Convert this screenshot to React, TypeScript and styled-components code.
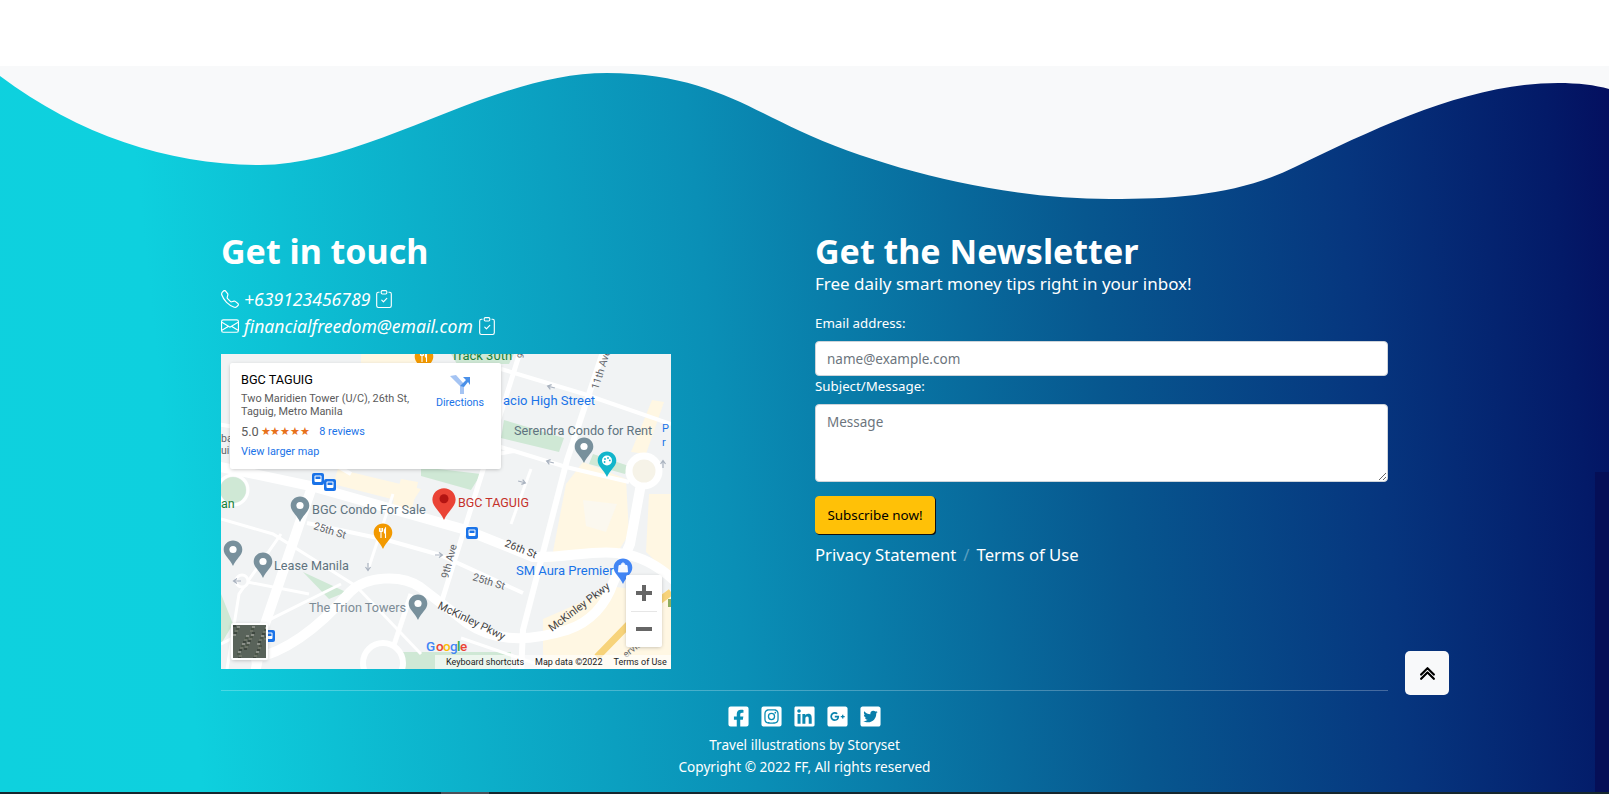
import React from 'react';
import styled, { createGlobalStyle } from 'styled-components';
import { BsTelephone, BsEnvelope, BsClipboardCheck, BsChevronDoubleUp } from 'react-icons/bs';
import { FaFacebookSquare, FaInstagramSquare, FaLinkedin, FaGooglePlusSquare, FaTwitterSquare } from 'react-icons/fa';

const GlobalStyle = createGlobalStyle`
  html, body {
    margin: 0;
    padding: 0;
    height: 794px;
    overflow: hidden;
    background: #fff;
  }
  * { box-sizing: border-box; }
`;

const Page = styled.div`
  width: 1609px;
  height: 794px;
  display: flex;
  flex-direction: column;
  font-family: "Noto Sans", "Open Sans", sans-serif;
  color: #fff;
`;

const TopGap = styled.div`
  height: 66px;
  background: #fff;
  flex: none;
`;

const Footer = styled.footer`
  position: relative;
  height: 728px;
  flex: none;
  display: flex;
  flex-direction: column;
  background: linear-gradient(84deg, #0ed1de 0%, #0ed0de 12%, #0a8fb6 45%, #07578f 68%, #06357e 84%, #031a68 96%, #040f5f 100%);
`;

const Wave = styled.svg`
  display: block;
  flex: none;
  width: 1609px;
  height: 140px;
`;

const Content = styled.div`
  flex: 1;
  width: 1167px;
  margin-left: 221px;
`;

const Columns = styled.div`
  display: grid;
  grid-template-columns: 594px 573px;
  height: 465px;
  padding-top: 19px;
  margin-bottom: 19px;
`;

const Column = styled.div`
  display: flex;
  flex-direction: column;
`;

const Heading = styled.h2`
  margin: 0;
  font-size: 34px;
  line-height: 52px;
  font-weight: 700;
`;

const ContactRow = styled.div`
  display: flex;
  align-items: center;
  gap: 5px;
  height: 27px;
  font-size: 17.6px;
  font-style: italic;
  font-weight: 400;
  svg { flex: none; font-size: 18px; }
`;

const ContactList = styled.div`
  margin-top: 8px;
  margin-bottom: 15px;
`;

const MapFrame = styled.div`
  position: relative;
  width: 450px;
  height: 315px;
  overflow: hidden;
  background: #f1f3f4;
  font-family: Roboto, sans-serif;
`;

const MapSvg = styled.svg`
  display: block;
  width: 450px;
  height: 315px;
`;

const InfoCard = styled.div`
  position: absolute;
  left: 9px;
  top: 9px;
  width: 271px;
  height: 106px;
  background: #fff;
  border-radius: 2px;
  box-shadow: 0 1px 4px -1px rgba(0, 0, 0, 0.3);
  padding: 9px 11px;
  color: #5b5b5b;
`;

const CardTitle = styled.div`
  font-size: 12.7px;
  line-height: 15px;
  font-weight: 400;
  color: #000;
`;

const CardAddress = styled.div`
  font-size: 10.9px;
  line-height: 13px;
  margin-top: 5px;
  width: 185px;
`;

const CardRating = styled.div`
  display: flex;
  align-items: center;
  margin-top: 5px;
  height: 16px;
  font-size: 12.8px;
`;

const CardStars = styled.span`
  color: #e7711b;
  font-size: 11.4px;
  letter-spacing: -0.3px;
  margin: 0 10px 0 2px;
`;

const MapLink = styled.span`
  color: #1a73e8;
  font-size: 10.9px;
`;

const LargerMap = styled(MapLink)`
  display: block;
  margin-top: 6px;
`;

const Directions = styled.div`
  position: absolute;
  top: 11px;
  left: 195px;
  width: 70px;
  display: flex;
  flex-direction: column;
  align-items: center;
  gap: 2px;
  font-size: 10.7px;
  color: #1a73e8;
`;

const ZoomBox = styled.div`
  position: absolute;
  left: 405px;
  top: 221px;
  width: 36px;
  height: 72px;
  background: #fff;
  border-radius: 2px;
  box-shadow: 0 1px 4px -1px rgba(0, 0, 0, 0.3);
  display: flex;
  flex-direction: column;
`;

const ZoomButton = styled.div<{ $divided?: boolean }>`
  flex: 1;
  display: flex;
  align-items: center;
  justify-content: center;
  ${(p) => (p.$divided ? 'border-top: 1px solid #e6e6e6; margin: 0 5px;' : '')}
`;

const SatelliteThumb = styled.div`
  position: absolute;
  left: 10px;
  top: 269px;
  width: 37px;
  height: 37px;
  border: 2px solid #fff;
  border-radius: 2px;
  box-shadow: 0 1px 4px -1px rgba(0, 0, 0, 0.3);
  overflow: hidden;
  background: #5b655a;
  svg { display: block; }
`;

const Attribution = styled.div`
  position: absolute;
  left: 214px;
  right: 0;
  bottom: 0;
  height: 14px;
  display: flex;
  align-items: center;
  gap: 11px;
  padding-left: 11px;
  font-size: 9px;
  color: #222;
  background: rgba(255, 255, 255, 0.6);
  white-space: nowrap;
`;

const Lead = styled.p`
  margin: -4px 0 0;
  font-size: 17px;
  line-height: 22px;
`;

const Form = styled.form`
  display: flex;
  flex-direction: column;
  margin-top: 16px;
`;

const Label = styled.label`
  font-size: 13.3px;
  line-height: 20px;
  height: 30px;
  padding-top: 2px;
`;

const SubjectLabel = styled(Label)`
  height: 28px;
  padding-top: 0;
`;

const Input = styled.input`
  width: 573px;
  height: 35px;
  border: 1px solid #ced4da;
  border-radius: 4px;
  padding: 0 11px;
  font: 13.5px "Noto Sans", sans-serif;
  color: #212529;
  background: #fff;
  &::placeholder { color: #6c757d; }
`;

const TextArea = styled.textarea`
  display: block;
  width: 573px;
  height: 78px;
  border: 1px solid #ced4da;
  border-radius: 4px;
  padding: 7px 11px;
  font: 13.5px/20px "Noto Sans", sans-serif;
  background: #fff;
  resize: vertical;
  &::placeholder { color: #6c757d; }
`;

const Subscribe = styled.button`
  align-self: flex-start;
  width: 120px;
  height: 38px;
  margin-top: 14px;
  border: 1px solid #ffc107;
  border-radius: 4px;
  background: #ffc107;
  box-shadow: 1px 1px 0 #111;
  font: 13.4px "Noto Sans", sans-serif;
  color: #000;
  padding: 0;
`;

const Legal = styled.div`
  display: flex;
  align-items: center;
  gap: 7px;
  height: 24px;
  margin-top: 8px;
  font-size: 16.7px;
`;

const Slash = styled.span`
  color: rgba(255, 255, 255, 0.35);
`;

const Divider = styled.hr`
  margin: 0;
  border: 0;
  border-top: 1px solid rgba(255, 255, 255, 0.25);
`;

const Socials = styled.div`
  display: flex;
  justify-content: center;
  gap: 10px;
  margin-top: 14px;
  font-size: 23px;
  line-height: 0;
`;

const Credits = styled.div`
  margin-top: 6px;
`;

const Credit = styled.div`
  text-align: center;
  font-size: 13.6px;
  line-height: 22px;
`;

const BackToTop = styled.button`
  position: absolute;
  left: 1405px;
  top: 585px;
  width: 44px;
  height: 44px;
  border: 0;
  border-radius: 5px;
  background: #f8f9fa;
  color: #000;
  display: flex;
  align-items: center;
  justify-content: center;
  font-size: 17px;
  padding: 0;
`;

const EdgeShade = styled.div`
  position: absolute;
  left: 1595px;
  right: 0;
  top: 406px;
  bottom: 2px;
  background: #050f57;
`;

const BottomBar = styled.div`
  flex: none;
  height: 2px;
  background: #16272e;
`;

const BarThumb = styled.div`
  width: 48px;
  height: 2px;
  margin-left: 441px;
  background: #4b5058;
`;

type PinProps = { x: number; y: number; color?: string; scale?: number; children?: React.ReactNode };

// map pin, x/y is the centre of the head
const Pin = ({ x, y, color = '#78909c', scale = 1, children }: PinProps) => (
  <g transform={`translate(${x} ${y}) scale(${scale})`}>
    <path d="M0 -9.5C5.2 -9.5 9.3 -5.4 9.3 -0.3C9.3 5.2 3 9 0 16C-3 9 -9.3 5.2 -9.3 -0.3C-9.3 -5.4 -5.2 -9.5 0 -9.5Z" fill={color} />
    {children ?? <circle cx="0" cy="-0.5" r="3.6" fill="#fff" />}
  </g>
);

const Fork = () => (
  <path d="M-3.5 -5V-1.5M-2 -5V5M-0.5 -5V-1.5M-3.5 -1.5H-0.5M2.5 5V-5C1.5 -4 1.2 -2 1.5 0H2.5" fill="none" stroke="#fff" strokeWidth="1.1" />
);

const Palette = () => (
  <g>
    <circle cx="0" cy="-0.5" r="5" fill="#fff" />
    <circle cx="-2" cy="-2" r="0.9" fill="#12b5cb" />
    <circle cx="1" cy="-3" r="0.9" fill="#12b5cb" />
    <circle cx="2.8" cy="-0.6" r="0.9" fill="#12b5cb" />
    <circle cx="-2.4" cy="1" r="0.9" fill="#12b5cb" />
  </g>
);

const Bag = () => (
  <path d="M-4 -2.5H4L4.6 4H-4.6ZM-2 -2.5C-2 -6 2 -6 2 -2.5" fill="#fff" stroke="#fff" strokeWidth="0.8" fillOpacity="0.95" />
);

const Bus = ({ x, y }: { x: number; y: number }) => (
  <g transform={`translate(${x} ${y})`}>
    <rect x="-6" y="-6" width="12" height="12" rx="2" fill="#1a73e8" />
    <rect x="-3.5" y="-3.5" width="7" height="6.5" rx="1" fill="#fff" />
    <rect x="-2.5" y="-2.5" width="5" height="2.5" fill="#1a73e8" />
  </g>
);

const Arrow = ({ x, y, r = 0 }: { x: number; y: number; r?: number }) => (
  <path transform={`translate(${x} ${y}) rotate(${r})`} d="M-4 0H3M0 -2.5L3.5 0L0 2.5" fill="none" stroke="#a9b2bf" strokeWidth="1.2" />
);

const roads: [string, number][] = [
  ['M-5 112L90 132L245 176L312 203C345 204 370 196 396 199C420 201 438 212 455 228', 10],
  ['M92 130L42 276L34 320', 10],
  ['M30 305C60 300 92 280 129 238C145 222 180 220 199 233L246 269C270 285 300 290 346 276C370 268 385 250 392 229L409 190L420 130', 10],
  ['M383 -5L346 106L302 276L300 320', 6],
  ['M300 -5L262 116L219 253', 5],
  ['M86 169L166 186L219 201L302 239', 4],
  ['M280 15L363 40L450 70', 4],
  ['M200 113L293 97M270 90L345 113L408 128', 4],
  ['M-5 70L60 80L130 120', 4],
  ['M0 165L52 180L135 232', 3],
  ['M120 230L0 290', 3],
  ['M190 240L170 300', 5],
  ['M172 140L147 216', 3],
  ['M310 115L290 170', 3],
  ['M60 180L18 240L6 315', 3],
  ['M21 227L88 240', 3],
  ['M135 232L200 300', 3],
  ['M240 284L330 315', 3],
];

// fake aerial photo for the layer button
const satelliteSpots = Array.from({ length: 48 }, (_, i) => ({
  x: (i * 13) % 33,
  y: (i * 7 + (i % 5) * 3) % 33,
  c: ['#3e473f', '#8b9088', '#4a5548', '#6d7568'][i % 4],
}));

const MapDrawing = () => (
  <MapSvg viewBox="0 0 450 315">
    <rect width="450" height="315" fill="#f1f3f4" />
    <path d="M140 0H200V9H140Z" fill="#fff7e3" />
    <path d="M117 115L200 135L190 150L112 130Z" fill="#fff7e3" />
    <path d="M180 125L197 128L190 160L170 155Z" fill="#fff7e3" />
    <path d="M362 108L405 125L408 180L398 196L330 208L345 130Z" fill="#fff7e3" />
    <path d="M431 46L443 48L425 100L410 98Z" fill="#fff7e3" />
    <path d="M428 140L450 140V222L425 198Z" fill="#fff7e3" />
    <path d="M322 265L395 233L450 240V315H322Z" fill="#fff7e3" />
    <path d="M362 146L396 150L385 178L365 172Z" fill="#fbf8ef" />
    <path d="M283 66L343 84L338 98L280 84Z" fill="#cfe8d5" />
    <path d="M200 113L260 120L250 136L200 122Z" fill="#cfe8d5" />
    <path d="M82 218L125 238L108 245Z" fill="#cfe8d5" />
    <path d="M178 298H290V315H178Z" fill="#cfe8d5" />
    <path d="M0 240L12 270L0 290Z" fill="#cfe8d5" />
    <path d="M230 0H293L288 10L236 10Z" fill="#cfe8d5" />
    <path d="M372 100L408 112L404 120L368 110Z" fill="#cfe8d5" />
    <circle cx="12" cy="136" r="13" fill="#cfe8d5" />
    <path d="M376 303L410 268L450 238" fill="none" stroke="#f7d37a" strokeWidth="7" />
    <rect x="447" y="245" width="3" height="8" fill="#8fae5f" />
    {roads.map(([d, w], i) => (
      <path key={i} d={d} fill="none" stroke="#fff" strokeWidth={w} />
    ))}
    <circle cx="423" cy="117" r="15" fill="#f6f3e8" stroke="#fff" strokeWidth="7" />
    <circle cx="162" cy="309" r="20" fill="#f1f3f4" stroke="#fff" strokeWidth="6" />
    <circle cx="21" cy="227" r="6" fill="#f1f3f4" stroke="#fff" strokeWidth="3" />
    <circle cx="12" cy="136" r="15" fill="none" stroke="#fff" strokeWidth="3" />
    <Arrow x={329} y={108} r={195} />
    <Arrow x={301} y={128} r={15} />
    <Arrow x={330} y={33} r={195} />
    <Arrow x={218} y={201} />
    <Arrow x={147} y={213} r={90} />
    <Arrow x={16} y={227} r={180} />
    <Arrow x={442} y={110} r={-90} />

    <g fontFamily="Roboto, sans-serif" fontSize="12.7" fill="#5f7380">
      <text x="293" y="81">Serendra Condo for Rent</text>
      <text x="91" y="160">BGC Condo For Sale</text>
      <text x="53" y="216">Lease Manila</text>
      <text x="88" y="258" fill="#7c8b96">The Trion Towers</text>
    </g>
    <g fontFamily="Roboto, sans-serif" fontSize="13" fill="#1a73e8">
      <text x="295" y="221">SM Aura Premier</text>
      <text x="282" y="51">acio High Street</text>
      <text x="441" y="78" fontSize="11">P</text>
      <text x="441" y="92" fontSize="11">r</text>
    </g>
    <text x="230" y="6" fontFamily="Roboto, sans-serif" fontSize="13" fill="#188038">Track 30th</text>
    <text x="0" y="154" fontFamily="Roboto, sans-serif" fontSize="12.5" fill="#188038">an</text>
    <text x="237" y="153" fontFamily="Roboto, sans-serif" fontSize="12.5" fill="#c5302a">BGC TAGUIG</text>
    <g fontFamily="Roboto, sans-serif" fontSize="10.5" fill="#5f6368">
      <text transform="translate(92 175) rotate(17)">25th St</text>
      <text transform="translate(251 226) rotate(17)">25th St</text>
      <text transform="translate(283 192) rotate(22)" fill="#444">26th St</text>
      <text transform="translate(227 225) rotate(-75)">9th Ave</text>
      <text transform="translate(377 36) rotate(-72)">11th Ave</text>
      <text transform="translate(216 254) rotate(26)" fontSize="11" fill="#444">McKinley Pkwy</text>
      <text transform="translate(331 278) rotate(-37)" fontSize="11" fill="#444">McKinley Pkwy</text>
      <text transform="translate(405 304) rotate(-38)" fontSize="9.5">ervice R</text>
      <text x="0" y="88">ba</text>
      <text x="0" y="100">ui</text>
      <text transform="translate(302 5) rotate(-75)" fontSize="9">9</text>
    </g>

    <Pin x={363} y={93} />
    <Pin x={79} y={152} />
    <Pin x={42} y={208} />
    <Pin x={12} y={196} />
    <Pin x={197} y={250} />
    <Pin x={386} y={107} color="#12b5cb"><Palette /></Pin>
    <Pin x={162} y={179} color="#f29900"><Fork /></Pin>
    <Pin x={402} y={214} color="#4285f4"><Bag /></Pin>
    <Pin x={203} y={3} color="#f29900"><Fork /></Pin>
    <Pin x={223} y={146} color="#ea4335" scale={1.25}><circle cx="0" cy="-1" r="3.6" fill="#b31412" /></Pin>
    <Bus x={97} y={125} />
    <Bus x={109} y={131} />
    <Bus x={251} y={179} />
    <Bus x={48} y={282} />

    <g fontFamily="Roboto, sans-serif" fontSize="13.5" fontWeight="500">
      <text x="205" y="297" fill="#4285f4">G</text>
      <text x="215" y="297" fill="#ea4335">o</text>
      <text x="222" y="297" fill="#fbbc05">o</text>
      <text x="229" y="297" fill="#4285f4">g</text>
      <text x="236" y="297" fill="#34a853">l</text>
      <text x="239" y="297" fill="#ea4335">e</text>
    </g>
  </MapSvg>
);

export default function App() {
  return (
    <Page>
      <GlobalStyle />
      <TopGap />
      <Footer>
        <Wave viewBox="0 0 1609 140">
          <path
            d="M0 0V10C80 70 170 99 260 99C370 99 490 7 607 7C700 7 745 40 800 65C880 102 1000 133 1110 133C1180 133 1240 128 1295 101C1380 60 1470 17 1558 17C1578 17 1595 19 1609 23V0Z"
            fill="#f8f9fa"
          />
        </Wave>
        <Content>
          <Columns>
            <Column>
              <Heading>Get in touch</Heading>
              <ContactList>
                <ContactRow><BsTelephone /> +639123456789 <BsClipboardCheck /></ContactRow>
                <ContactRow><BsEnvelope /> financialfreedom@email.com <BsClipboardCheck /></ContactRow>
              </ContactList>
              <MapFrame>
                <MapDrawing />
                <InfoCard>
                  <CardTitle>BGC TAGUIG</CardTitle>
                  <CardAddress>Two Maridien Tower (U/C), 26th St, Taguig, Metro Manila</CardAddress>
                  <CardRating>
                    5.0<CardStars>★★★★★</CardStars><MapLink>8 reviews</MapLink>
                  </CardRating>
                  <LargerMap>View larger map</LargerMap>
                  <Directions>
                    <svg width="22" height="20" viewBox="0 0 22 20">
                      <path d="M1 2L11 12V20H15V10L7 1Z" fill="#a5c4f3" />
                      <path d="M11 12L17 6L14 3H21V11L19 8L15 13Z" fill="#4a90e8" />
                    </svg>
                    Directions
                  </Directions>
                </InfoCard>
                <ZoomBox>
                  <ZoomButton>
                    <svg width="18" height="18" viewBox="0 0 18 18"><path d="M7 1h4v6h6v4h-6v6H7v-6H1V7h6z" fill="#666" /></svg>
                  </ZoomButton>
                  <ZoomButton $divided>
                    <svg width="18" height="18" viewBox="0 0 18 18"><path d="M1 7h16v4H1z" fill="#666" /></svg>
                  </ZoomButton>
                </ZoomBox>
                <SatelliteThumb>
                  <svg width="33" height="33" viewBox="0 0 33 33">
                    <rect width="33" height="33" fill="#59635a" />
                    {satelliteSpots.map((s, i) => (
                      <rect key={i} x={s.x} y={s.y} width="3" height="2" fill={s.c} />
                    ))}
                  </svg>
                </SatelliteThumb>
                <Attribution>
                  <span>Keyboard shortcuts</span>
                  <span>Map data ©2022</span>
                  <span>Terms of Use</span>
                </Attribution>
              </MapFrame>
            </Column>
            <Column>
              <Heading>Get the Newsletter</Heading>
              <Lead>Free daily smart money tips right in your inbox!</Lead>
              <Form>
                <Label>Email address:</Label>
                <Input placeholder="name@example.com" />
                <SubjectLabel>Subject/Message:</SubjectLabel>
                <TextArea placeholder="Message" />
                <Subscribe type="button">Subscribe now!</Subscribe>
                <Legal>
                  <span>Privacy Statement</span>
                  <Slash>/</Slash>
                  <span>Terms of Use</span>
                </Legal>
              </Form>
            </Column>
          </Columns>
          <Divider />
          <Socials>
            <FaFacebookSquare />
            <FaInstagramSquare />
            <FaLinkedin />
            <FaGooglePlusSquare />
            <FaTwitterSquare />
          </Socials>
          <Credits>
            <Credit>Travel illustrations by Storyset</Credit>
            <Credit>Copyright © 2022 FF, All rights reserved</Credit>
          </Credits>
        </Content>
        <EdgeShade />
        <BackToTop type="button"><BsChevronDoubleUp strokeWidth={1} /></BackToTop>
        <BottomBar><BarThumb /></BottomBar>
      </Footer>
    </Page>
  );
}
